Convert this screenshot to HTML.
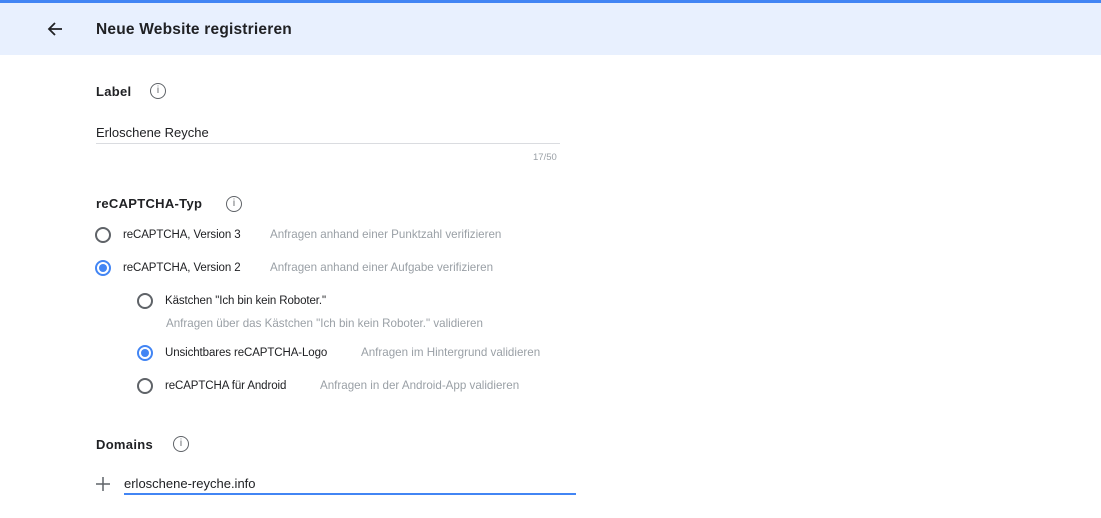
<!DOCTYPE html>
<html><head><style>
body{margin:0;width:1101px;height:518px;background:#fff;font-family:"Liberation Sans",Arial,sans-serif;position:relative;overflow:hidden;color:#202124}
.a{position:absolute;white-space:nowrap}
.hb{position:absolute;left:0;top:0;width:1101px;height:3px;background:#4285f4}
.hd{position:absolute;left:0;top:3px;width:1101px;height:52px;background:#e8f0fe}
.lbl{font-size:13px;font-weight:bold;color:#202124;letter-spacing:0.3px}
.opt{font-size:11.5px;color:#202124;letter-spacing:-0.1px;line-height:14px}
.dsc{font-size:11.6px;color:#9aa0a6;line-height:14px}
.r{position:absolute;width:12px;height:12px;border:2px solid #5f6368;border-radius:50%}
.r.on{border-color:#4285f4}
.r.on::after{content:"";position:absolute;left:2px;top:2px;width:8px;height:8px;border-radius:50%;background:#4285f4}
.info{position:absolute;width:14px;height:14px;border:1.5px solid #5f6368;border-radius:50%;font-size:10px;color:#5f6368;text-align:center;line-height:14px}
</style></head><body>
<div class="hb"></div><div class="hd"></div>
<svg class="a" style="left:47px;top:21px" width="16" height="16" viewBox="0 0 16 16"><path d="M15 8H2M8 2L2 8l6 6" stroke="#202124" stroke-width="1.8" fill="none"/></svg>
<div class="a" style="left:96px;top:21px;font-size:15.5px;font-weight:bold;letter-spacing:0.2px">Neue Website registrieren</div>

<div class="a lbl" style="left:96px;top:84px">Label</div>
<div class="info" style="left:150px;top:83px">i</div>
<div class="a" style="left:96px;top:125px;font-size:13px">Erloschene Reyche</div>
<div class="a" style="left:96px;top:143px;width:464px;height:1px;background:#dadce0"></div>
<div class="a" style="left:533px;top:152px;font-size:9.5px;color:#9aa0a6">17/50</div>

<div class="a lbl" style="left:96px;top:196px">reCAPTCHA-Typ</div>
<div class="info" style="left:226px;top:196px">i</div>

<div class="r" style="left:95px;top:227px"></div>
<div class="a opt" style="left:123px;top:228px">reCAPTCHA, Version 3</div>
<div class="a dsc" style="left:270px;top:228px">Anfragen anhand einer Punktzahl verifizieren</div>

<div class="r on" style="left:95px;top:260px"></div>
<div class="a opt" style="left:123px;top:261px">reCAPTCHA, Version 2</div>
<div class="a dsc" style="left:270px;top:261px">Anfragen anhand einer Aufgabe verifizieren</div>

<div class="r" style="left:137px;top:293px"></div>
<div class="a opt" style="left:165px;top:294px">Kästchen "Ich bin kein Roboter."</div>
<div class="a dsc" style="left:166px;top:317px">Anfragen über das Kästchen "Ich bin kein Roboter." validieren</div>

<div class="r on" style="left:137px;top:345px"></div>
<div class="a opt" style="left:165px;top:346px">Unsichtbares reCAPTCHA-Logo</div>
<div class="a dsc" style="left:361px;top:346px">Anfragen im Hintergrund validieren</div>

<div class="r" style="left:137px;top:378px"></div>
<div class="a opt" style="left:165px;top:379px">reCAPTCHA für Android</div>
<div class="a dsc" style="left:320px;top:379px">Anfragen in der Android-App validieren</div>

<div class="a lbl" style="left:96px;top:437px">Domains</div>
<div class="info" style="left:173px;top:436px">i</div>
<svg class="a" style="left:96px;top:477px" width="14" height="14"><path d="M7 0v14M0 7h14" stroke="#5f6368" stroke-width="1.5"/></svg>
<div class="a" style="left:124px;top:476px;font-size:13px">erloschene-reyche.info</div>
<div class="a" style="left:124px;top:493px;width:452px;height:2px;background:#4285f4"></div>
</body></html>
